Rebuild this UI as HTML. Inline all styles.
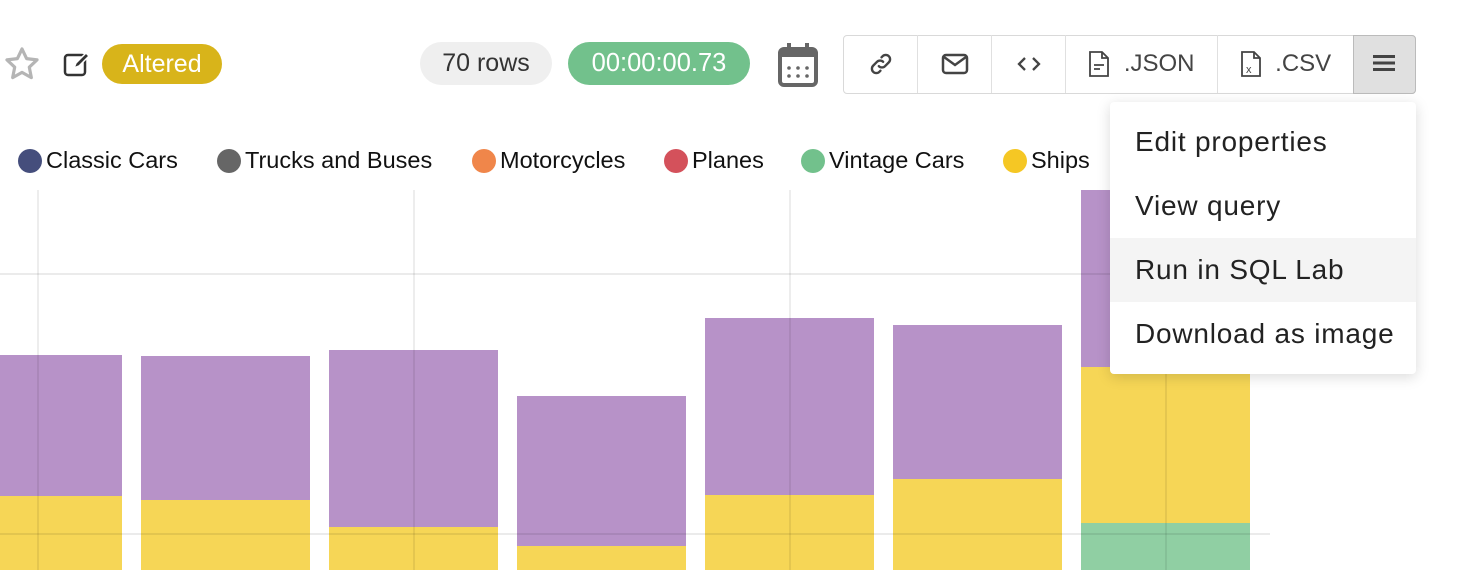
<!DOCTYPE html>
<html><head><style>
body{margin:0;width:1458px;height:570px;overflow:hidden;background:#fff;font-family:"Liberation Sans",sans-serif;position:relative}
.a{position:absolute}
.pill{position:absolute;border-radius:22px;text-align:center;font-size:25px}
.btn{position:absolute;top:35px;height:58px;border-right:1px solid #e0e0e0;display:flex;align-items:center;justify-content:center;color:#444;font-size:24px}
.leg{position:absolute;top:147px;font-size:23.5px;color:#111;display:flex;align-items:center}
.leg i{display:inline-block;width:24px;height:24px;border-radius:50%;margin-right:4px}
.bar{position:absolute}
.mi{position:absolute;left:1110px;width:306px;height:64px;font-size:28px;color:#222;line-height:64px;text-indent:25px;letter-spacing:.8px}
</style></head><body>
<svg class="a" style="left:3px;top:45px" width="38" height="38" viewBox="0 0 24 24"><path d="M12 2.5l2.9 6.1 6.6.8-4.9 4.6 1.3 6.6L12 17.3l-5.9 3.3 1.3-6.6L2.5 9.4l6.6-.8z" fill="none" stroke="#b5b5b5" stroke-width="2" stroke-linejoin="round"/></svg>
<svg class="a" style="left:63px;top:50px" width="30" height="28" viewBox="0 0 30 28"><rect x="2" y="5" width="20" height="20" rx="3" fill="none" stroke="#333" stroke-width="2.5"/><path d="M11 18l2-5 10-10 3 3-10 10z" fill="#333" stroke="#fff" stroke-width="1.5"/></svg>
<div class="pill" style="left:102px;top:44px;width:120px;height:40px;line-height:40px;background:#d8b41a;color:#fff">Altered</div>
<div class="pill" style="left:420px;top:42px;width:132px;height:43px;line-height:43px;background:#efefef;color:#333">70 rows</div>
<div class="pill" style="left:568px;top:42px;width:182px;height:43px;line-height:43px;background:#72c18c;color:#fff;font-size:25.5px">00:00:00.73</div>
<svg class="a" style="left:777px;top:42px" width="42" height="46" viewBox="0 0 42 46"><rect x="3" y="7" width="36" height="36" rx="4" fill="none" stroke="#666" stroke-width="4"/><rect x="3" y="7" width="36" height="8" fill="#666"/><rect x="10" y="1" width="4" height="10" fill="#666"/><rect x="28" y="1" width="4" height="10" fill="#666"/><g fill="#666"><circle cx="12" cy="26" r="1.8"/><circle cx="21" cy="26" r="1.8"/><circle cx="30" cy="26" r="1.8"/><circle cx="12" cy="34" r="1.8"/><circle cx="21" cy="34" r="1.8"/><circle cx="30" cy="34" r="1.8"/></g></svg>
<div class="a" style="left:843px;top:35px;width:571px;height:57px;border:1px solid #d9d9d9;border-radius:4px"></div>
<div class="btn" style="left:844px;width:73px"><svg width="26" height="26" viewBox="0 0 24 24" fill="none" stroke="#444" stroke-width="2.2" stroke-linecap="round"><path d="M10 14a4 4 0 0 0 5.7 0l3.5-3.5a4 4 0 0 0-5.7-5.7l-1 1"/><path d="M14 10a4 4 0 0 0-5.7 0l-3.5 3.5a4 4 0 0 0 5.7 5.7l1-1"/></svg></div>
<div class="btn" style="left:918px;width:73px"><svg width="28" height="22" viewBox="0 0 28 22" fill="none" stroke="#444" stroke-width="2.5"><rect x="2" y="2" width="24" height="18" rx="3"/><path d="M3 4l11 8 11-8"/></svg></div>
<div class="btn" style="left:992px;width:73px"><svg width="26" height="18" viewBox="0 0 26 18" fill="none" stroke="#444" stroke-width="2.3"><path d="M9 3L3 9l6 6M17 3l6 6-6 6"/></svg></div>
<div class="btn" style="left:1066px;width:151px"><svg width="22" height="28" viewBox="0 0 22 28" fill="none" stroke="#444" stroke-width="1.8"><path d="M2 2h12l6 6v18H2z"/><path d="M14 2v6h6M6 15h10M6 19h6"/></svg>&nbsp;&nbsp;.JSON</div>
<div class="btn" style="left:1218px;width:135px"><svg width="22" height="28" viewBox="0 0 22 28" fill="none" stroke="#444" stroke-width="1.8"><path d="M2 2h12l6 6v18H2z"/><path d="M14 2v6h6"/><text x="6" y="23" font-size="11" fill="#444" stroke="none" font-family="Liberation Sans">x</text></svg>&nbsp;&nbsp;.CSV</div>
<div class="a" style="left:1353px;top:35px;width:61px;height:57px;background:#e0e0e0;border:1px solid #bbb;border-radius:0 4px 4px 0"></div>
<svg class="a" style="left:1373px;top:54px" width="22" height="18" viewBox="0 0 22 18" fill="#444"><rect y="1" width="22" height="3"/><rect y="7.5" width="22" height="3"/><rect y="14" width="22" height="3"/></svg>
<div class="leg" style="left:18px"><i style="background:#454e7c"></i>Classic Cars</div>
<div class="leg" style="left:217px"><i style="background:#666"></i>Trucks and Buses</div>
<div class="leg" style="left:472px"><i style="background:#f0864a"></i>Motorcycles</div>
<div class="leg" style="left:664px"><i style="background:#d4515b"></i>Planes</div>
<div class="leg" style="left:801px"><i style="background:#72c18c"></i>Vintage Cars</div>
<div class="leg" style="left:1003px"><i style="background:#f5c724"></i>Ships</div>
<div class="bar" style="left:0;top:355px;width:122px;height:141px;background:#b792c8"></div><div class="bar" style="left:0;top:496px;width:122px;height:74px;background:#f6d656"></div>
<div class="bar" style="left:141px;top:356px;width:169px;height:144px;background:#b792c8"></div><div class="bar" style="left:141px;top:500px;width:169px;height:70px;background:#f6d656"></div>
<div class="bar" style="left:329px;top:350px;width:169px;height:177px;background:#b792c8"></div><div class="bar" style="left:329px;top:527px;width:169px;height:43px;background:#f6d656"></div>
<div class="bar" style="left:517px;top:396px;width:169px;height:150px;background:#b792c8"></div><div class="bar" style="left:517px;top:546px;width:169px;height:24px;background:#f6d656"></div>
<div class="bar" style="left:705px;top:318px;width:169px;height:177px;background:#b792c8"></div><div class="bar" style="left:705px;top:495px;width:169px;height:75px;background:#f6d656"></div>
<div class="bar" style="left:893px;top:325px;width:169px;height:154px;background:#b792c8"></div><div class="bar" style="left:893px;top:479px;width:169px;height:91px;background:#f6d656"></div>
<div class="bar" style="left:1081px;top:190px;width:169px;height:177px;background:#b792c8"></div><div class="bar" style="left:1081px;top:367px;width:169px;height:156px;background:#f6d656"></div><div class="bar" style="left:1081px;top:523px;width:169px;height:47px;background:#90cfa3"></div>
<div class="a" style="left:37px;top:190px;width:2px;height:380px;background:rgba(0,0,0,.07)"></div>
<div class="a" style="left:413px;top:190px;width:2px;height:380px;background:rgba(0,0,0,.07)"></div>
<div class="a" style="left:789px;top:190px;width:2px;height:380px;background:rgba(0,0,0,.07)"></div>
<div class="a" style="left:1165px;top:190px;width:2px;height:380px;background:rgba(0,0,0,.07)"></div>
<div class="a" style="left:0;top:273px;width:1270px;height:2px;background:rgba(0,0,0,.08)"></div>
<div class="a" style="left:0;top:533px;width:1270px;height:2px;background:rgba(0,0,0,.08)"></div>
<div class="a" style="left:1110px;top:102px;width:306px;height:272px;background:#fff;border-radius:4px;box-shadow:0 3px 14px rgba(0,0,0,.15)"></div>
<div class="mi" style="top:110px">Edit properties</div>
<div class="mi" style="top:174px">View query</div>
<div class="mi" style="top:238px;background:#f4f4f4">Run in SQL Lab</div>
<div class="mi" style="top:302px">Download as image</div>
</body></html>
